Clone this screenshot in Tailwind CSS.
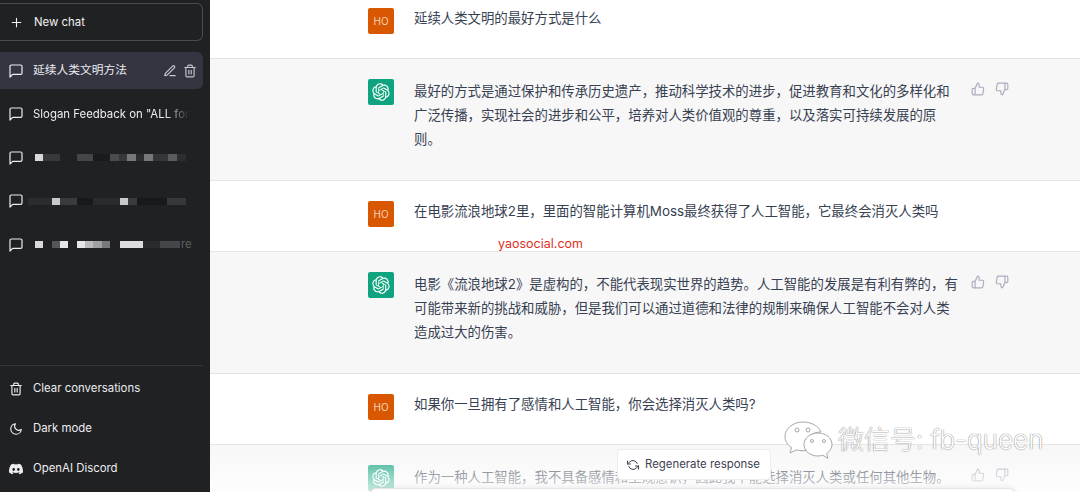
<!DOCTYPE html>
<html lang="zh">

<head>
    <meta charset="UTF-8">
    <meta name="viewport" content="width=device-width, initial-scale=1.0">
    <title>ChatGPT</title>
    <script src="https://cdn.jsdelivr.net/npm/@tailwindcss/browser@4"></script>
</head>

<body class="h-[492px] w-[1080px] overflow-hidden bg-white font-['Inter','Noto_Sans_CJK_SC',sans-serif]">
    <!-- Shared icons -->
    <svg class="hidden">
        <symbol id="msg" viewBox="0 0 24 24"><path d="M21 15a2 2 0 0 1-2 2H7l-4 4V5a2 2 0 0 1 2-2h14a2 2 0 0 1 2 2z" fill="none" stroke="currentColor" stroke-width="1.8" stroke-linejoin="round"/></symbol>
        <symbol id="trash" viewBox="0 0 24 24"><g fill="none" stroke="currentColor" stroke-width="2" stroke-linecap="round" stroke-linejoin="round"><path d="M3 6h18"/><path d="M19 6v14a2 2 0 0 1-2 2H7a2 2 0 0 1-2-2V6m3 0V4a2 2 0 0 1 2-2h4a2 2 0 0 1 2 2v2"/><path d="M10 11v6M14 11v6"/></g></symbol>
        <symbol id="up" viewBox="0 0 24 24"><path d="M14 9V5a3 3 0 0 0-3-3l-4 9v11h11.28a2 2 0 0 0 2-1.7l1.38-9a2 2 0 0 0-2-2.3zM7 22H4a2 2 0 0 1-2-2v-7a2 2 0 0 1 2-2h3" fill="none" stroke="currentColor" stroke-width="2" stroke-linecap="round" stroke-linejoin="round"/></symbol>
        <symbol id="down" viewBox="0 0 24 24"><path d="M10 15v4a3 3 0 0 0 3 3l4-9V2H5.72a2 2 0 0 0-2 1.7l-1.38 9a2 2 0 0 0 2 2.3zm7-13h2.67A2.31 2.31 0 0 1 22 4v7a2.31 2.31 0 0 1-2.33 2H17" fill="none" stroke="currentColor" stroke-width="2" stroke-linecap="round" stroke-linejoin="round"/></symbol>
        <symbol id="gpt" viewBox="0 0 41 41"><path fill="currentColor" d="M37.5324 16.8707C37.9808 15.5241 38.1363 14.0974 37.9886 12.6859C37.8409 11.2744 37.3934 9.91076 36.676 8.68622C35.6126 6.83404 33.9882 5.3676 32.0373 4.4985C30.0864 3.62941 27.9098 3.40259 25.8215 3.85078C24.8796 2.7893 23.7219 1.94125 22.4257 1.36341C21.1295 0.785575 19.7249 0.491269 18.3058 0.500197C16.1708 0.495044 14.0893 1.16803 12.3614 2.42214C10.6335 3.67624 9.34853 5.44666 8.6917 7.47815C7.30085 7.76286 5.98686 8.3414 4.8377 9.17505C3.68854 10.0087 2.73073 11.0782 2.02839 12.312C0.956464 14.1591 0.498905 16.2988 0.721698 18.4228C0.944492 20.5467 1.83612 22.5449 3.268 24.1293C2.81966 25.4759 2.66413 26.9026 2.81182 28.3141C2.95951 29.7256 3.40701 31.0892 4.12437 32.3138C5.18791 34.1659 6.8123 35.6322 8.76321 36.5013C10.7141 37.3704 12.8907 37.5973 14.9789 37.1492C15.9208 38.2107 17.0786 39.0587 18.3747 39.6366C19.6709 40.2144 21.0755 40.5087 22.4946 40.4998C24.6307 40.5054 26.7133 39.8321 28.4418 38.5772C30.1704 37.3223 31.4556 35.5506 32.1119 33.5179C33.5027 33.2332 34.8167 32.6547 35.9659 31.821C37.115 30.9874 38.0728 29.9178 38.7752 28.684C39.8458 26.8371 40.3023 24.6979 40.0789 22.5748C39.8556 20.4517 38.9639 18.4544 37.5324 16.8707ZM22.4978 37.8849C20.7443 37.8874 19.0459 37.2733 17.6994 36.1501C17.7601 36.117 17.8666 36.0586 17.936 36.0161L25.9004 31.4156C26.1003 31.3019 26.2663 31.137 26.3813 30.9378C26.4964 30.7386 26.5563 30.5124 26.5549 30.2825V19.0542L29.9213 20.998C29.9389 21.0068 29.9541 21.0198 29.9656 21.0359C29.977 21.052 29.9842 21.0707 29.9867 21.0902V30.3889C29.9842 32.375 29.1946 34.2791 27.7909 35.6841C26.3872 37.0892 24.4838 37.8806 22.4978 37.8849ZM6.39227 31.0064C5.51397 29.4888 5.19742 27.7107 5.49804 25.9832C5.55718 26.0187 5.66048 26.0818 5.73461 26.1244L13.699 30.7248C13.8975 30.8408 14.1233 30.902 14.3532 30.902C14.583 30.902 14.8088 30.8408 15.0073 30.7248L24.731 25.1103V28.9979C24.7321 29.0177 24.7283 29.0376 24.7199 29.0556C24.7115 29.0736 24.6988 29.0893 24.6829 29.1012L16.6317 33.7497C14.9096 34.7416 12.8643 35.0097 10.9447 34.4954C9.02506 33.9811 7.38785 32.7263 6.39227 31.0064ZM4.29707 13.6194C5.17156 12.0998 6.55279 10.9364 8.19885 10.3327C8.19885 10.4013 8.19491 10.5228 8.19491 10.6071V19.808C8.19351 20.0378 8.25334 20.2638 8.36823 20.4629C8.48312 20.6619 8.64893 20.8267 8.84863 20.9404L18.5723 26.5542L15.206 28.4979C15.1894 28.5089 15.1703 28.5155 15.1505 28.5173C15.1307 28.5191 15.1107 28.516 15.0924 28.5082L7.04046 23.8557C5.32135 22.8601 4.06716 21.2235 3.55289 19.3046C3.03862 17.3858 3.30624 15.3413 4.29707 13.6194ZM31.955 20.0556L22.2312 14.4411L25.5976 12.4981C25.6142 12.4872 25.6333 12.4805 25.6531 12.4787C25.6729 12.4769 25.6928 12.4801 25.7111 12.4879L33.7631 17.1364C34.9967 17.849 36.0017 18.8982 36.6606 20.1613C37.3194 21.4244 37.6047 22.849 37.4832 24.2684C37.3617 25.6878 36.8382 27.0432 35.9743 28.1759C35.1103 29.3086 33.9415 30.1717 32.6047 30.6641C32.6047 30.5947 32.6047 30.4733 32.6047 30.3889V21.188C32.6066 20.9586 32.5474 20.7328 32.4332 20.5338C32.319 20.3348 32.154 20.1698 31.955 20.0556ZM35.3055 15.0128C35.2464 14.9765 35.1431 14.9142 35.069 14.8717L27.1045 10.2712C26.906 10.1554 26.6803 10.0943 26.4504 10.0943C26.2206 10.0943 25.9948 10.1554 25.7963 10.2712L16.0726 15.8858V11.9982C16.0715 11.9783 16.0753 11.9585 16.0837 11.9405C16.0921 11.9225 16.1048 11.9068 16.1207 11.8949L24.1719 7.25025C25.4053 6.53903 26.8158 6.19376 28.2383 6.25482C29.6608 6.31589 31.0364 6.78077 32.2044 7.59508C33.3723 8.40939 34.2842 9.53945 34.8334 10.8531C35.3826 12.1667 35.5464 13.6095 35.3055 15.0128ZM14.2424 21.9419L10.8752 19.9981C10.8576 19.9893 10.8423 19.9763 10.8309 19.9602C10.8195 19.9441 10.8122 19.9254 10.8098 19.9058V10.6071C10.8107 9.18295 11.2173 7.78848 11.9819 6.58696C12.7466 5.38544 13.8377 4.42659 15.1275 3.82264C16.4173 3.21869 17.8524 2.99464 19.2649 3.1767C20.6775 3.35876 22.0089 3.93941 23.1034 4.85067C23.0427 4.88379 22.937 4.94215 22.8668 4.98473L14.9024 9.58517C14.7025 9.69878 14.5366 9.86356 14.4215 10.0626C14.3065 10.2616 14.2466 10.4877 14.2479 10.7175L14.2424 21.9419ZM16.071 17.9991L20.4018 15.4978L24.7325 17.9975V22.9985L20.4018 25.4983L16.071 22.9985V17.9991Z"/></symbol>
    </svg>

    <div class="flex h-[492px]">
        <!-- Sidebar -->
        <aside class="flex h-full w-[210px] shrink-0 flex-col bg-[#202123] pt-[3px] pr-[7px] text-[11.4px] text-[#ececf1]">
            <div class="flex h-[38px] items-center gap-[11px] rounded-r-[6px] border border-l-0 border-[#4a4b53] pl-[10px] pt-[1px] text-[#f1f1f4]">
                <svg class="h-[13px] w-[13px]" viewBox="0 0 24 24" fill="none" stroke="currentColor" stroke-width="2" stroke-linecap="round"><path d="M12 4v16M4 12h16"/></svg>
                <span>New chat</span>
            </div>

            <!-- Chat list -->
            <div class="mt-[11px] flex flex-col gap-[6.6px]">
                <div class="flex h-[37px] items-center rounded-r-[6px] bg-[#343541] pl-[8px] pr-[6px]">
                    <svg class="h-[16px] w-[16px] shrink-0"><use href="#msg"/></svg>
                    <span class="ml-[9px] flex-1 text-[11.75px]">延续人类文明方法</span>
                    <svg class="h-[14px] w-[14px] text-[#c5c5d2]" viewBox="0 0 24 24" fill="none" stroke="currentColor" stroke-width="2" stroke-linecap="round" stroke-linejoin="round"><path d="M12 20h9"/><path d="M16.5 3.5a2.121 2.121 0 0 1 3 3L7 19l-4 1 1-4L16.5 3.5z"/></svg>
                    <svg class="ml-[6px] h-[14px] w-[14px] text-[#c5c5d2]"><use href="#trash"/></svg>
                </div>
                <div class="flex h-[37px] items-center pl-[8px] pr-[14px]">
                    <svg class="h-[16px] w-[16px] shrink-0"><use href="#msg"/></svg>
                    <span class="ml-[9px] whitespace-nowrap [mask-image:linear-gradient(to_right,black_85%,transparent)]">Slogan Feedback on "ALL for</span>
                </div>
                <!-- pixelated titles -->
                <div class="flex h-[37px] items-center pl-[8px]">
                    <svg class="h-[16px] w-[16px] shrink-0"><use href="#msg"/></svg>
                    <div class="ml-[11px] flex h-[8px] items-center blur-[0.6px]">
                        <i class="h-[7px] w-[8px] bg-[#d8d8da]"></i><i class="h-[7px] w-[17px] bg-[#38393c]"></i><i class="h-[7px] w-[17px] bg-[#202123]"></i><i class="h-[7px] w-[16px] bg-[#45464a]"></i><i class="h-[7px] w-[17px] bg-[#1a1b1d]"></i><i class="h-[7px] w-[9px] bg-[#4a4b4f]"></i><i class="h-[7px] w-[8px] bg-[#37383b]"></i><i class="h-[7px] w-[9px] bg-[#77787c]"></i><i class="h-[7px] w-[8px] bg-[#2c2d30]"></i><i class="h-[7px] w-[9px] bg-[#76777b]"></i><i class="h-[7px] w-[15px] bg-[#35363a]"></i><i class="h-[7px] w-[9px] bg-[#5b5c60]"></i><i class="h-[7px] w-[9px] bg-[#2c2d30]"></i>
                    </div>
                </div>
                <div class="flex h-[37px] items-center pl-[8px]">
                    <svg class="h-[16px] w-[16px] shrink-0"><use href="#msg"/></svg>
                    <div class="ml-[4px] flex h-[8px] items-center blur-[0.6px]">
                        <i class="h-[7px] w-[24px] bg-[#2b2c2f]"></i><i class="h-[7px] w-[8px] bg-[#c9c9cb]"></i><i class="h-[7px] w-[17px] bg-[#3a3b3e]"></i><i class="h-[7px] w-[16px] bg-[#18191b]"></i><i class="h-[7px] w-[27px] bg-[#2a2b2e]"></i><i class="h-[7px] w-[8px] bg-[#c9c9cb]"></i><i class="h-[7px] w-[9px] bg-[#3a3b3e]"></i><i class="h-[7px] w-[30px] bg-[#18191b]"></i><i class="h-[7px] w-[19px] bg-[#37383b]"></i>
                    </div>
                </div>
                <div class="flex h-[37px] items-center pl-[8px]">
                    <svg class="h-[16px] w-[16px] shrink-0"><use href="#msg"/></svg>
                    <div class="ml-[11px] flex h-[8px] items-center">
                        <i class="h-[7px] w-[8px] bg-[#d8d8da] blur-[0.6px]"></i><i class="h-[7px] w-[9px]"></i><i class="h-[7px] w-[8px] bg-[#55565a] blur-[0.6px]"></i><i class="h-[7px] w-[8px] bg-[#e6e6e8] blur-[0.6px]"></i><i class="h-[7px] w-[9px]"></i><i class="h-[7px] w-[8px] bg-[#e6e6e8] blur-[0.6px]"></i><i class="h-[7px] w-[8px] bg-[#bbbbbd] blur-[0.6px]"></i><i class="h-[7px] w-[9px] bg-[#a0a1a4] blur-[0.6px]"></i><i class="h-[7px] w-[8px] bg-[#77787c] blur-[0.6px]"></i><i class="h-[7px] w-[10px]"></i><i class="h-[7px] w-[23px] bg-[#dddddf] blur-[0.6px]"></i><i class="h-[7px] w-[17px] bg-[#2a2b2e] blur-[0.6px]"></i><i class="h-[7px] w-[20px] bg-[#45464a] blur-[0.6px]"></i><span class="ml-[1px] text-[11.4px] text-[#5f6065]">re</span>
                    </div>
                </div>
            </div>

            <!-- Bottom links -->
            <div class="mt-auto border-t border-[#35363a] pb-[3px] pt-[3px]">
                <div class="flex h-[40px] items-center gap-[10px] pl-[9px]">
                    <svg class="h-[14px] w-[14px]"><use href="#trash"/></svg>
                    <span>Clear conversations</span>
                </div>
                <div class="flex h-[40px] items-center gap-[10px] pl-[9px]">
                    <svg class="h-[14px] w-[14px]" viewBox="0 0 24 24" fill="none" stroke="currentColor" stroke-width="2" stroke-linecap="round" stroke-linejoin="round"><path d="M21 12.79A9 9 0 1 1 11.21 3 7 7 0 0 0 21 12.79z"/></svg>
                    <span>Dark mode</span>
                </div>
                <div class="flex h-[40px] items-center gap-[10px] pl-[9px]">
                    <svg class="h-[14px] w-[14px]" viewBox="0 0 16 16" fill="currentColor"><path d="M13.545 2.907a13.2 13.2 0 0 0-3.257-1.011.05.05 0 0 0-.052.025c-.141.25-.297.577-.406.833a12.2 12.2 0 0 0-3.658 0 8 8 0 0 0-.412-.833.05.05 0 0 0-.052-.025c-1.125.194-2.22.534-3.257 1.011a.04.04 0 0 0-.021.018C.356 6.024-.213 9.047.066 12.032q.003.022.021.037a13.3 13.3 0 0 0 3.995 2.02.05.05 0 0 0 .056-.019q.463-.63.818-1.329a.05.05 0 0 0-.01-.059l-.018-.011a9 9 0 0 1-1.248-.595.05.05 0 0 1-.02-.066l.015-.019q.127-.095.248-.195a.05.05 0 0 1 .051-.007c2.619 1.196 5.454 1.196 8.041 0a.05.05 0 0 1 .053.007q.121.1.248.195a.05.05 0 0 1-.004.085 8 8 0 0 1-1.249.594.05.05 0 0 0-.03.03.05.05 0 0 0 .003.041c.24.465.515.909.817 1.329a.05.05 0 0 0 .056.019 13.2 13.2 0 0 0 4.001-2.02.05.05 0 0 0 .021-.037c.334-3.451-.559-6.449-2.366-9.106a.03.03 0 0 0-.02-.019m-8.198 7.307c-.789 0-1.438-.724-1.438-1.612s.637-1.613 1.438-1.613c.807 0 1.45.73 1.438 1.613 0 .888-.637 1.612-1.438 1.612m5.316 0c-.788 0-1.438-.724-1.438-1.612s.637-1.613 1.438-1.613c.807 0 1.451.73 1.438 1.613 0 .888-.631 1.612-1.438 1.612"/></svg>
                    <span>OpenAI Discord</span>
                </div>
            </div>
        </aside>

        <!-- Conversation -->
        <main class="relative h-full flex-1 overflow-hidden text-[13.4px] leading-[24px] text-[#374151]">
            <div class="-mt-[12px]">
                <div class="flex h-[71px] gap-[20px] border-b border-[#e5e5e5] pl-[158px] pt-[20px]">
                    <div class="flex h-[26px] w-[26px] shrink-0 items-center justify-center rounded-[2px] bg-[#d95700] text-[10px] leading-none text-[#f5d3bb]">HO</div>
                    <p class="-mt-[2px] w-[545px]">延续人类文明的最好方式是什么</p>
                </div>
                <div class="flex h-[122px] gap-[20px] border-b border-[#e5e5e5] bg-[#f7f7f8] pl-[158px] pt-[20px]">
                    <div class="flex h-[26px] w-[26px] shrink-0 items-center justify-center rounded-[2px] bg-[#10a37f] text-white">
                        <svg class="h-[18px] w-[18px]"><use href="#gpt"/></svg>
                    </div>
                    <p class="w-[545px]">最好的方式是通过保护和传承历史遗产，推动科学技术的进步，促进教育和文化的多样化和广泛传播，实现社会的进步和公平，培养对人类价值观的尊重，以及落实可持续发展的原则。</p>
                    <div class="-ml-[8px] mt-[3px] flex h-[14px] gap-[10px] text-[#acacbe]">
                        <svg class="h-[14px] w-[14px]"><use href="#up"/></svg>
                        <svg class="h-[14px] w-[14px]"><use href="#down"/></svg>
                    </div>
                </div>
                <div class="flex h-[71px] gap-[20px] border-b border-[#e5e5e5] pl-[158px] pt-[20px]">
                    <div class="flex h-[26px] w-[26px] shrink-0 items-center justify-center rounded-[2px] bg-[#d95700] text-[10px] leading-none text-[#f5d3bb]">HO</div>
                    <p class="-mt-[2px] w-[545px]">在电影流浪地球2里，里面的智能计算机Moss最终获得了人工智能，它最终会消灭人类吗</p>
                </div>
                <div class="flex h-[122px] gap-[20px] border-b border-[#e5e5e5] bg-[#f7f7f8] pl-[158px] pt-[20px]">
                    <div class="flex h-[26px] w-[26px] shrink-0 items-center justify-center rounded-[2px] bg-[#10a37f] text-white">
                        <svg class="h-[18px] w-[18px]"><use href="#gpt"/></svg>
                    </div>
                    <p class="w-[545px]">电影《流浪地球2》是虚构的，不能代表现实世界的趋势。人工智能的发展是有利有弊的，有可能带来新的挑战和威胁，但是我们可以通过道德和法律的规制来确保人工智能不会对人类造成过大的伤害。</p>
                    <div class="-ml-[8px] mt-[3px] flex h-[14px] gap-[10px] text-[#acacbe]">
                        <svg class="h-[14px] w-[14px]"><use href="#up"/></svg>
                        <svg class="h-[14px] w-[14px]"><use href="#down"/></svg>
                    </div>
                </div>
                <div class="flex h-[71px] gap-[20px] border-b border-[#e5e5e5] pl-[158px] pt-[20px]">
                    <div class="flex h-[26px] w-[26px] shrink-0 items-center justify-center rounded-[2px] bg-[#d95700] text-[10px] leading-none text-[#f5d3bb]">HO</div>
                    <p class="-mt-[2px] w-[545px]">如果你一旦拥有了感情和人工智能，你会选择消灭人类吗?</p>
                </div>
                <div class="flex h-[122px] gap-[20px] bg-[#f7f7f8] pl-[158px] pt-[20px]">
                    <div class="flex h-[26px] w-[26px] shrink-0 items-center justify-center rounded-[2px] bg-[#10a37f] text-white">
                        <svg class="h-[18px] w-[18px]"><use href="#gpt"/></svg>
                    </div>
                    <p class="w-[545px]">作为一种人工智能，我不具备感情和主观意识，因此我不能选择消灭人类或任何其他生物。</p>
                    <div class="-ml-[8px] mt-[3px] flex h-[14px] gap-[10px] text-[#acacbe]">
                        <svg class="h-[14px] w-[14px]"><use href="#up"/></svg>
                        <svg class="h-[14px] w-[14px]"><use href="#down"/></svg>
                    </div>
                </div>
            </div>

            <!-- Fade over the last message -->
            <div class="absolute inset-x-0 bottom-0 h-[47px] bg-gradient-to-b from-white/0 to-white/80"></div>

            <!-- Regenerate -->
            <div class="absolute left-[407px] top-[449px] flex h-[31px] w-[154px] items-center gap-[6px] rounded-[4px] border border-[#ececf1] bg-white pl-[9px] text-[11.4px] leading-none text-[#40414f]">
                <svg class="h-[12px] w-[12px]" viewBox="0 0 24 24" fill="none" stroke="currentColor" stroke-width="2" stroke-linecap="round" stroke-linejoin="round"><path d="M1 4v6h6M23 20v-6h-6"/><path d="M20.49 9A9 9 0 0 0 5.64 5.64L1 10m22 4l-4.64 4.36A9 9 0 0 1 3.51 15"/></svg>
                <span>Regenerate response</span>
            </div>

            <!-- Input box, cut by the window -->
            <div class="absolute left-[160px] top-[488px] h-[20px] w-[645px] rounded-[6px] border border-[#e5e5e5] bg-white shadow-[0_0_6px_rgba(0,0,0,0.1)]"></div>

            <!-- Watermarks -->
            <span class="absolute left-[288px] top-[237px] text-[12.5px] leading-[14px] text-[#e0311e]">yaosocial.com</span>
            <div class="absolute left-[573px] top-[419px] flex items-center gap-[5px]">
                <svg class="h-[42px] w-[50px]" viewBox="0 0 50 42" fill="#fff" stroke="#a8a8a8" stroke-width="1"><path d="M20 3C10 3 2 9.500 2 17.500c0 4.500 2.500 8.500 6.500 11L7 34l6.500-3.200c2 .6 4.200.9 6.500.9 1 0 2-.1 3-.2-.6-1.600-1-3.200-1-5 0-7.500 7-13.500 16-13.500C36 7.500 28.800 3 20 3z"/><path d="M35 14c-7.700 0-14 5-14 11.500S27.300 37 35 37c1.700 0 3.300-.3 4.800-.7l5.200 3-1.300-4.800C46.900 32.300 49 29.100 49 25.500 49 19 42.700 14 35 14z"/><circle cx="14" cy="11" r="2" fill="none"/><circle cx="25" cy="11" r="2" fill="none"/><circle cx="29" cy="22" r="1.500" fill="none"/><circle cx="41" cy="22" r="1.500" fill="none"/></svg>
                <span class="whitespace-nowrap text-[26px] font-light leading-[32px] text-white [text-shadow:0_0_1px_#888,0_0_1px_#888]">微信号: fb-queen</span>
            </div>
        </main>
    </div>
</body>

</html>
